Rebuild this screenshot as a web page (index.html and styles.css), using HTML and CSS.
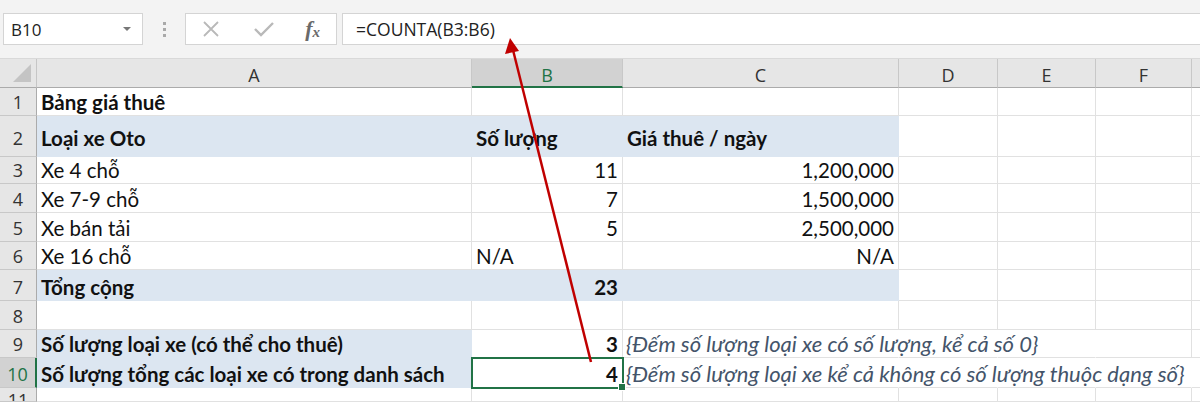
FILE: index.html
```html
<!DOCTYPE html>
<html>
<head>
<meta charset="utf-8">
<link rel="stylesheet" href="styles.css">
</head>
<body>
<div class="app">
  <div class="toolbar">
    <div class="namebox">
      <span class="name">B10</span>
      <svg class="dd" width="10" height="6" viewBox="0 0 10 6"><path d="M1 1 L5 5 L9 1 Z" fill="#777"/></svg>
    </div>
    <div class="dots"><i></i><i></i><i></i></div>
    <div class="fxgroup">
      <svg class="ico" width="22" height="22" viewBox="0 0 22 22"><path d="M4 4 L18 18 M18 4 L4 18" stroke="#b9b9b9" stroke-width="1.8" fill="none"/></svg>
      <svg class="ico" width="24" height="22" viewBox="0 0 24 22"><path d="M3 11 L9 17 L21 5" stroke="#b9b9b9" stroke-width="2.4" fill="none"/></svg>
      <span class="fx">f<sub>x</sub></span>
    </div>
    <div class="formula">=COUNTA(B3:B6)</div>
  </div>
  <div class="sheet">
    <div class="corner"><svg width="20" height="20" viewBox="0 0 20 20"><path d="M19 1 L19 19 L1 19 Z" fill="#c4c4c4"/></svg></div>
    <div class="ch">A</div>
    <div class="ch sel">B</div>
    <div class="ch">C</div>
    <div class="ch">D</div>
    <div class="ch">E</div>
    <div class="ch">F</div>
    <div class="ch last"></div>

    <div class="rh">1</div>
    <div class="c b">Bảng giá thuê</div><div class="c"></div><div class="c"></div><div class="c"></div><div class="c"></div><div class="c"></div><div class="c"></div>

    <div class="rh mid">2</div>
    <div class="c b f mid">Loại xe Oto</div><div class="c b f mid">Số lượng</div><div class="c b f mid">Giá thuê / ngày</div><div class="c"></div><div class="c"></div><div class="c"></div><div class="c"></div>

    <div class="rh">3</div>
    <div class="c">Xe 4 chỗ</div><div class="c r">11</div><div class="c r">1,200,000</div><div class="c"></div><div class="c"></div><div class="c"></div><div class="c"></div>

    <div class="rh">4</div>
    <div class="c">Xe 7-9 chỗ</div><div class="c r">7</div><div class="c r">1,500,000</div><div class="c"></div><div class="c"></div><div class="c"></div><div class="c"></div>

    <div class="rh">5</div>
    <div class="c">Xe bán tải</div><div class="c r">5</div><div class="c r">2,500,000</div><div class="c"></div><div class="c"></div><div class="c"></div><div class="c"></div>

    <div class="rh">6</div>
    <div class="c">Xe 16 chỗ</div><div class="c">N/A</div><div class="c r">N/A</div><div class="c"></div><div class="c"></div><div class="c"></div><div class="c"></div>

    <div class="rh">7</div>
    <div class="c b f">Tổng cộng</div><div class="c b f r">23</div><div class="c f"></div><div class="c"></div><div class="c"></div><div class="c"></div><div class="c"></div>

    <div class="rh">8</div>
    <div class="c"></div><div class="c"></div><div class="c"></div><div class="c"></div><div class="c"></div><div class="c"></div><div class="c"></div>

    <div class="rh">9</div>
    <div class="c b f">Số lượng loại xe (có thể cho thuê)</div><div class="c b r">3</div><div class="c note">{Đếm số lượng loại xe có số lượng, kể cả số 0}</div><div class="c nb"></div><div class="c nb"></div><div class="c"></div><div class="c"></div>

    <div class="rh selr">10</div>
    <div class="c b f">Số lượng tổng các loại xe có trong danh sách</div><div class="c b r active">4<span class="handle"></span></div><div class="c note">{Đếm số lượng loại xe kể cả không có số lượng thuộc dạng số}</div><div class="c nb"></div><div class="c nb"></div><div class="c nb"></div><div class="c"></div>

    <div class="rh cut">11</div>
    <div class="c"></div><div class="c"></div><div class="c"></div><div class="c"></div><div class="c"></div><div class="c"></div><div class="c"></div>
  </div>
  <svg class="arrow" width="1200" height="402" viewBox="0 0 1200 402">
    <line x1="591" y1="362" x2="513" y2="50" stroke="#c00000" stroke-width="2.5"/>
    <path d="M510 38 L505 54 L519 51 Z" fill="#c00000"/>
  </svg>
</div>
</body>
</html>
```

FILE: styles.css
```css
html, body { margin: 0; padding: 0; }
body { width: 1200px; height: 402px; overflow: hidden; background: #fff; font-family: "Lato", "Open Sans", sans-serif; }
.app { position: relative; width: 1200px; height: 402px; }

.toolbar { height: 59px; background: #f3f3f3; border-bottom: 1px solid #d9d9d9; display: flex; align-items: flex-start; padding-top: 13px; box-sizing: border-box; }
.namebox { margin-left: 3px; width: 140px; height: 32px; box-sizing: border-box; background: #fff; border: 1px solid #d4d4d4; display: flex; align-items: center; justify-content: space-between; padding: 0 10px 0 7px; }
.name { font-family: "Open Sans", sans-serif; font-size: 17px; color: #222; }
.dots { width: 42px; height: 32px; display: flex; flex-direction: column; align-items: center; justify-content: center; gap: 3px; }
.dots i { display: block; width: 3px; height: 3px; background: #a9a9a9; }
.fxgroup { width: 152px; height: 32px; box-sizing: border-box; background: #fff; border: 1px solid #d4d4d4; display: flex; align-items: center; justify-content: space-between; padding: 0 16px 0 14px; }
.fx { font-family: "Liberation Serif", serif; font-style: italic; font-weight: bold; font-size: 22px; color: #6a6a6a; line-height: 1; }
.fx sub { font-size: 15px; vertical-align: -1px; }
.formula { margin-left: 5px; flex: 1; height: 32px; box-sizing: border-box; background: #fff; border: 1px solid #d4d4d4; border-right: none; font-family: "Open Sans", sans-serif; font-size: 17.5px; color: #222; display: flex; align-items: center; padding-left: 13px; }

.sheet { display: grid; grid-template-columns: 37px 435px 151px 276px 99px 98px 96px 8px; grid-template-rows: 29px 28px 41px 27px 29px 29px 28px 31px 29px 28px 30px 14px; }
.corner { background: #e6e6e6; border-right: 1px solid #c6c6c6; border-bottom: 1px solid #ababab; box-sizing: border-box; display: flex; align-items: flex-end; justify-content: flex-end; padding: 0 4px 4px 0; }
.ch { background: #e6e6e6; border-right: 1px solid #c8c8c8; border-bottom: 1px solid #ababab; box-sizing: border-box; display: flex; align-items: center; justify-content: center; font-family: "Open Sans", sans-serif; font-size: 18px; color: #333; padding-top: 4px; }
.ch.last { border-right: none; }
.ch.sel { background: #d2d2d2; color: #217346; border-bottom: 2px solid #217346; }
.rh { background: #e6e6e6; border-right: 1px solid #ababab; border-bottom: 1px solid #c8c8c8; box-sizing: border-box; display: flex; align-items: flex-end; justify-content: center; font-family: "Open Sans", sans-serif; font-size: 18px; color: #333; padding-bottom: 1px; overflow: hidden; }
.rh.mid { align-items: center; padding-top: 4px; }
.rh.cut { align-items: flex-start; padding: 0; line-height: 24px; }
.rh.selr { background: #d2d2d2; color: #217346; border-right: 2px solid #217346; }

.c { border-right: 1px solid #e1e1e1; border-bottom: 1px solid #e1e1e1; box-sizing: border-box; font-size: 20.5px; line-height: 24px; color: #111; display: flex; align-items: flex-end; padding: 0 4px 1px 4px; white-space: nowrap; overflow: visible; position: relative; }
.c.mid { align-items: center; padding-top: 4px; }
.c.b { font-weight: bold; }
.c.r { justify-content: flex-end; }
.c.f { background: #dce6f1; border-color: #dce6f1; }
.c.nb { border-right-color: transparent; }
.c.note { font-style: italic; font-size: 22px; color: #44546a; z-index: 1; border-right-color: transparent; padding-left: 3px; }
.c.active { outline: 2px solid #217346; outline-offset: -1px; z-index: 2; }
.handle { position: absolute; right: -4px; bottom: -4px; width: 6px; height: 6px; background: #217346; border: 1px solid #fff; }

.arrow { position: absolute; left: 0; top: 0; pointer-events: none; z-index: 5; }
```
